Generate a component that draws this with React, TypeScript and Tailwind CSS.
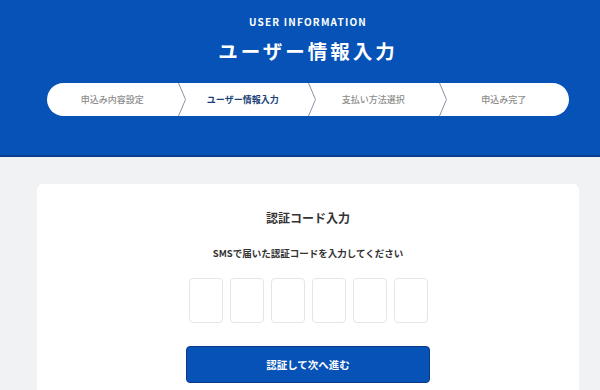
import React from "react";

const steps = ["申込み内容設定", "ユーザー情報入力", "支払い方法選択", "申込み完了"];

function Chevron() {
  return (
    <svg
      className="absolute left-full top-0 h-full w-[9px]"
      viewBox="0 0 9 33"
      preserveAspectRatio="none"
      fill="none"
    >
      <path d="M0.5 0 L7.5 16.5 L0.5 33" stroke="#8a93a3" strokeWidth="1" />
    </svg>
  );
}

export default function App() {
  const font = { fontFamily: '"Noto Sans CJK JP", "Liberation Sans", sans-serif' };
  return (
    <div className="min-h-[390px] w-[600px] bg-[#f1f2f4]" style={font}>
      <header className="border-b-2 border-[#0a3f8f] bg-[#0652b6] pl-[37px] pr-[21px] pt-[15px] pb-[39px] text-white">
        <p className="text-center text-[10px] font-bold leading-[14px] tracking-[1.2px]">
          USER INFORMATION
        </p>
        <h1 className="mt-[8px] text-center text-[19.5px] font-bold leading-[28px] tracking-[3px]">
          ユーザー情報入力
        </h1>
        <div className="mx-[10px] mt-[18px] flex h-[33px] overflow-hidden rounded-full bg-white">
          {steps.map((s, i) => (
            <div key={s} className="relative flex flex-1 items-center justify-center">
              <span
                className={
                  i === 1
                    ? "text-[9px] font-bold text-[#1c3f78]"
                    : "text-[9px] font-medium text-[#8c8c8c]"
                }
              >
                {s}
              </span>
              {i < steps.length - 1 && <Chevron />}
            </div>
          ))}
        </div>
      </header>

      <main className="pl-[37px] pr-[21px] pt-[27px]">
        <section className="flex flex-col items-center rounded-md bg-white pt-[26px] pb-[20px]">
          <h2 className="text-[12px] font-bold leading-[16px] text-[#333]">認証コード入力</h2>
          <p className="mt-[20px] text-[9.5px] font-bold leading-[14px] text-[#333]">
            SMSで届いた認証コードを入力してください
          </p>
          <div className="mt-[18px] flex gap-[7px]">
            {[0, 1, 2, 3, 4, 5].map((n) => (
              <input
                key={n}
                maxLength={1}
                className="h-[45px] w-[34px] rounded-[4px] border border-[#e3e5e8] bg-white text-center text-[14px] outline-none"
              />
            ))}
          </div>
          <button className="mt-[23px] h-[37px] w-[244px] rounded-[4px] border border-[#0a3a86] bg-[#0652b6] text-[10.5px] font-bold text-white">
            認証して次へ進む
          </button>
        </section>
      </main>
    </div>
  );
}
